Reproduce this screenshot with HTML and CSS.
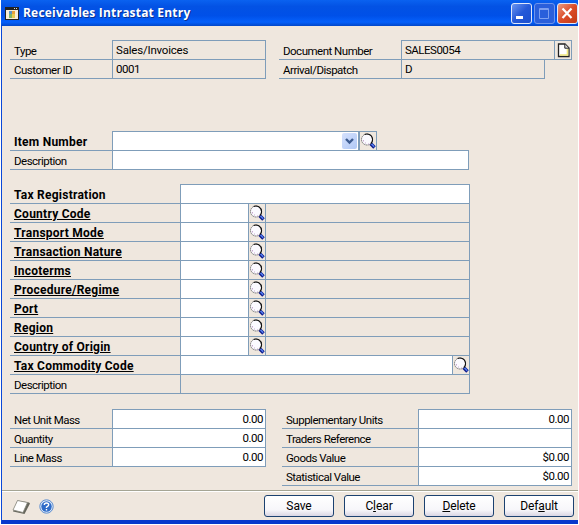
FILE: index.html
```html
<!DOCTYPE html>
<html lang="en">
<head>
<meta charset="utf-8">
<title>Receivables Intrastat Entry</title>
<link rel="stylesheet" href="styles.css">
</head>
<body>
<svg class="defs" width="0" height="0">
  <symbol id="lens" viewBox="0 0 16 18">
    <path d="M10.500 11.500l4 4" stroke="#101c8c" stroke-width="3.600"/>
    <path d="M11.400 11.800l2.800 2.900" stroke="#5580f0" stroke-width="1.400"/>
    <circle cx="7" cy="7.500" r="5.500" fill="#fbfaff" stroke="#777" stroke-width="1" stroke-dasharray="1.600 .5"/>
    <path d="M4.600 2.600Q7 1.300 9.800 2.800Q13.200 5 12.400 9Q12 10.500 10.800 11.500" fill="none" stroke="#111" stroke-width="1.100"/>
    <path d="M3.500 8v1.500M5 11h1M8 12h1" stroke="#c9a9d0"/>
  </symbol>
</svg>
<div class="window">
  <header class="titlebar">
    <svg class="app" width="14" height="13" viewBox="0 0 14 13"><path fill="#222" d="M0 0h14v13H0z"/><path fill="#f5efd9" d="M1 3h12v9H1z"/><path fill="#ddd" d="M9 1h1v1H9zM11 1h1v1h-1z"/><path fill="#5b96c8" d="M4 4h3v3H4z"/><path fill="#e8a33c" d="M7 4h3v3H7z"/><path fill="#7cb46b" d="M4 7h3v4H4z"/><path fill="#e7cb50" d="M7 7h3v4H7z"/></svg>
    <h1>Receivables Intrastat Entry</h1>
    <div class="controls">
      <span class="ctl"><svg width="19" height="19"><path fill="#fff" d="M4 12h7v3H4z"/></svg></span>
      <span class="ctl dim"><svg width="19" height="19"><path fill="none" stroke="#7d9ff0" d="M4.500 4.500h9v10h-9zM4 5.500h10"/></svg></span>
      <span class="ctl close"><svg width="19" height="19"><path fill="none" stroke="#fff" stroke-width="2.200" d="M4.500 4.500l9 9.500M13.500 4.500l-9 9.500"/></svg></span>
    </div>
  </header>
  <main>
    <section class="pair head">
      <div class="col left">
        <div class="row"><label>Type</label><div class="f ro top wide">Sales/Invoices</div></div>
        <div class="row"><label>Customer ID</label><div class="f ro">0001</div></div>
      </div>
      <div class="col doc">
        <div class="row"><label>Document Number</label><div class="f ro top">SALES0054</div><div class="pic top"><svg width="16" height="18" viewBox="0 0 16 18"><path d="M3.500 3h6.500l4 4v8.500h-10.500z" fill="#fff" stroke="#222" stroke-width="1.300"/><path d="M5 14h7.500V8" fill="none" stroke="#f1e97c" stroke-width="1.600"/><path d="M9.800 3v4.200h4" fill="#ddd" stroke="#222"/></svg></div></div>
        <div class="row short"><label>Arrival/Dispatch</label><div class="f ro">D</div></div>
      </div>
    </section>
    <section class="item">
      <div class="row itemrow"><label class="b">Item Number</label><div class="f top combo"><span class="drop"><svg width="15" height="16"><path d="M4 6l3.500 3.500L11 6" fill="none" stroke="#3d5c91" stroke-width="2.400"/></svg></span></div><div class="pic top"><svg width="16" height="18"><use href="#lens"/></svg></div></div>
      <div class="row"><label>Description</label><div class="f joined"></div></div>
    </section>
    <section class="tax">
      <div class="row"><label class="b">Tax Registration</label><div class="f top"></div></div>
      <div class="row look"><label class="b u"><span>Country Code</span></label><div class="f"></div><div class="pic"><svg width="16" height="18"><use href="#lens"/></svg></div><div class="rest"></div></div>
      <div class="row look"><label class="b u"><span>Transport Mode</span></label><div class="f"></div><div class="pic"><svg width="16" height="18"><use href="#lens"/></svg></div><div class="rest"></div></div>
      <div class="row look"><label class="b u"><span>Transaction Nature</span></label><div class="f"></div><div class="pic"><svg width="16" height="18"><use href="#lens"/></svg></div><div class="rest"></div></div>
      <div class="row look"><label class="b u"><span>Incoterms</span></label><div class="f"></div><div class="pic"><svg width="16" height="18"><use href="#lens"/></svg></div><div class="rest"></div></div>
      <div class="row look"><label class="b u"><span>Procedure/Regime</span></label><div class="f"></div><div class="pic"><svg width="16" height="18"><use href="#lens"/></svg></div><div class="rest"></div></div>
      <div class="row look"><label class="b u"><span>Port</span></label><div class="f"></div><div class="pic"><svg width="16" height="18"><use href="#lens"/></svg></div><div class="rest"></div></div>
      <div class="row look"><label class="b u"><span>Region</span></label><div class="f"></div><div class="pic"><svg width="16" height="18"><use href="#lens"/></svg></div><div class="rest"></div></div>
      <div class="row look"><label class="b u"><span>Country of Origin</span></label><div class="f"></div><div class="pic"><svg width="16" height="18"><use href="#lens"/></svg></div><div class="rest"></div></div>
      <div class="row"><label class="b u"><span>Tax Commodity Code</span></label><div class="f"></div><div class="pic"><svg width="16" height="18"><use href="#lens"/></svg></div></div>
      <div class="row"><label>Description</label><div class="f ro"></div></div>
    </section>
    <section class="pair totals">
      <div class="col left">
        <div class="row"><label>Net Unit Mass</label><div class="f top num">0.00</div></div>
        <div class="row"><label>Quantity</label><div class="f num">0.00</div></div>
        <div class="row"><label>Line Mass</label><div class="f num">0.00</div></div>
      </div>
      <div class="col right">
        <div class="row"><label>Supplementary Units</label><div class="f top num">0.00</div></div>
        <div class="row"><label>Traders Reference</label><div class="f num"></div></div>
        <div class="row"><label>Goods Value</label><div class="f num">$0.00</div></div>
        <div class="row"><label>Statistical Value</label><div class="f num">$0.00</div></div>
      </div>
    </section>
  </main>
  <footer>
    <svg class="note" width="19" height="17" viewBox="0 0 19 17"><path d="M5.500 1.500L17 3.500l1 1L12.500 15 1 12.500z" fill="#66665c"/><path d="M5.500 1.500L15.500 3.500 11 13.500 1 11z" fill="#fff" stroke="#85857a" stroke-width=".8"/></svg>
    <svg class="help" width="15" height="15" viewBox="0 0 15 15"><circle cx="7.500" cy="7.500" r="6.700" fill="#dce9fa" stroke="#5c8ccd"/><circle cx="7.500" cy="7.500" r="5.200" fill="#2f6cc8"/><path d="M5.300 6q0-2 2.200-2t2.200 1.800q0 1.200-2.200 2.300v1M7.500 10v1.500" stroke="#fff" stroke-width="1.400" fill="none"/></svg>
    <div class="buttons">
      <button>Save</button><button>C<u>l</u>ear</button><button><u>D</u>elete</button><button>Def<u>a</u>ult</button>
    </div>
  </footer>
</div>
</body>
</html>
```
FILE: styles.css
```css
* { box-sizing: border-box; }
body { margin: 0; background: #fff; overflow: hidden; font: 12px/18px Roboto, "Liberation Sans", sans-serif; letter-spacing: -.5px; color: #000; }
.defs { position: absolute; }
svg { display: block; flex: none; }
.window { width: 577px; height: 524px; margin-left: 1px; display: flex; flex-direction: column; background: #efe7de; border: solid #0a48d8; border-width: 0 0 4px 1px; border-bottom-color: #0838cc; }
.titlebar { height: 26px; margin-left: -1px; padding-left: 4px; display: flex; align-items: center; background: linear-gradient(#0a62f0, #0352e4 25%, #0050e8 60%, #0560fb 85%, #0347c8); }
h1 { flex: 1; margin: 0 0 0 4px; font: bold 12px/24px "Open Sans", "Noto Sans", sans-serif; letter-spacing: .2px; color: #fff; text-shadow: 1px 1px #0a3190; }
.controls { display: flex; gap: 2px; }
.ctl { width: 21px; height: 21px; border: 1px solid #dfe8fb; border-radius: 3px; background: linear-gradient(135deg, #6c95f0, #2459d8 50%, #1c50cf); }
.ctl.dim { border-color: #6f95ec; background: #2a5fdb; }
.ctl.close { background: linear-gradient(135deg, #e99b80, #dc4c28 50%, #c23a14); }
main { height: 464px; padding-left: 8px; }
.pair { display: flex; }
.head { margin-top: 14px; height: 91px; }
.row { display: flex; height: 19px; font-size: 11.5px; }
.row:first-child { height: 20px; }
.row > * { border-bottom: 1px solid #7f9db9; }
label { width: 102px; flex: none; padding: 1px 0 0 4px; white-space: nowrap; }
.row:first-child > label { padding-top: 2px; }
.f { flex: 1; border-left: 1px solid #7f9db9; border-right: 1px solid #7f9db9; padding-left: 3px; line-height: 18px; background: #fff; }
.top { border-top: 1px solid #7f9db9; }
.joined { box-shadow: 0 -1px #7f9db9; }
.ro { background: #efe7de; }
.wide { letter-spacing: -.2px; }
.num { text-align: right; padding-right: 2px; }
.pic { width: 17px; flex: none; border-right: 1px solid #7f9db9; background: #efe7de; }
.left { width: 256px; }
.doc { width: 293px; margin-left: 13px; }
.doc label { width: 122px; }
.doc .short { width: 266px; }
.item { height: 53px; width: 459px; }
.itemrow { width: 367px; }
.combo { display: flex; justify-content: flex-end; padding: 1px 1px 1px 0; border-right-width: 2px; }
.drop { width: 15px; height: 16px; border-radius: 2px; background: linear-gradient(135deg, #d5e1fd, #b0c8f5); }
.tax { width: 460px; height: 225px; }
.tax label { width: 170px; }
.look .f { flex: none; width: 69px; }
.rest { flex: 1; border-right: 1px solid #7f9db9; }
.b { font-size: 12px; font-weight: 700; letter-spacing: .25px; }
.u { text-decoration: underline; }
.right { width: 290px; margin-left: 16px; }
.right label { width: 136px; }
footer { height: 30px; border-top: 1px solid #a5a594; box-shadow: inset 0 1px #fff; display: flex; align-items: flex-start; padding: 4px 4px 0 10px; }
.note { margin-top: 4px; }
.help { margin: 4px 0 0 8px; }
.buttons { margin-left: auto; display: flex; gap: 10px; }
button { width: 70px; height: 22px; padding: 0; border: 1px solid #1b4170; border-radius: 3px; background: linear-gradient(#fff, #f7f6fa 70%, #d9d5e4); font: inherit; letter-spacing: -.1px; color: #000; }
```
